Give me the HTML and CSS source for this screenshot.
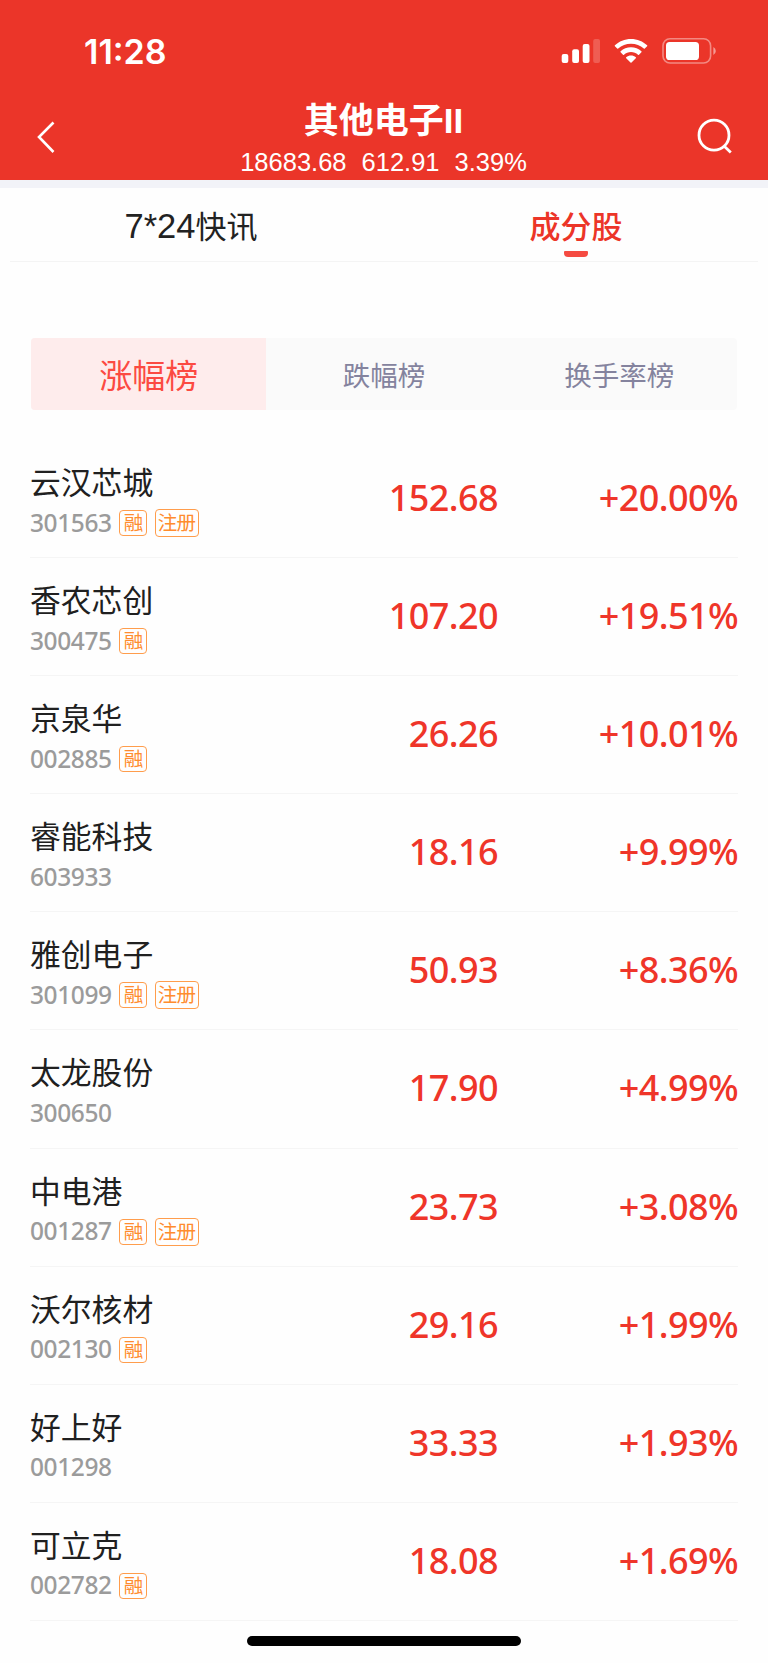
FILE: index.html
```html
<!DOCTYPE html>
<html lang="zh-CN">
<head>
<meta charset="utf-8">
<meta name="viewport" content="width=device-width">
<title>其他电子II</title>
<link rel="stylesheet" href="styles.css">
</head>
<body>
<header class="header">
  <div class="status">
    <span class="time">11:28</span>
    <svg class="status-icons" width="160" height="32" viewBox="0 0 160 32" fill="#fff">
      <rect x="1.7" y="18" width="6.6" height="9" rx="2"/>
      <rect x="12.2" y="13.3" width="6.8" height="13.7" rx="2"/>
      <rect x="22.7" y="8" width="6.8" height="19" rx="2"/>
      <rect x="33.2" y="3" width="6.8" height="24" rx="2" opacity=".2"/>
      <g transform="translate(54.6 3)">
        <path d="M16.4 0C10.1 0 4.5 2.4.3 6.3q-.5.5 0 1L2.6 9.6q.5.5 1 0C7 6.4 11.5 4.8 16.4 4.8s9.400 1.600 12.800 4.800q.5.5 1 0l2.300-2.300q.5-.5 0-1C28.300 2.400 22.700 0 16.400 0z"/>
        <path d="M16.400 8.300c-4 0-7.600 1.500-10.400 4q-.5.5 0 1l2.400 2.400q.5.5 1 .1c1.900-1.700 4.300-2.700 7-2.700s5.100 1 7 2.700q.5.4 1-.1l2.400-2.400q.5-.5 0-1c-2.800-2.500-6.400-4-10.400-4z"/>
        <path d="M16.400 16.500c-1.800 0-3.500.6-4.800 1.700q-.6.500 0 1l4.300 4.400q.5.500 1 0l4.300-4.400q.6-.5 0-1c-1.300-1.100-3-1.700-4.800-1.700z"/>
      </g>
      <rect x="103" y="2.700" width="47.600" height="24.300" rx="7" fill="none" stroke="#fff" stroke-opacity=".42" stroke-width="1.600"/>
      <rect x="106" y="6" width="33" height="18" rx="3.600"/>
      <path d="M153.400 11v8q2.400-1.400 2.400-4t-2.400-4z" opacity=".5"/>
    </svg>
  </div>
  <div class="nav">
    <svg class="back" width="24" height="36" viewBox="0 0 24 36" fill="none" stroke="#fff" stroke-width="2.600"><path d="M18.500 3.500 4 18l14.500 15"/></svg>
    <div class="heading">
      <h1 class="title">其他电子<span class="roman">II</span></h1>
      <div class="quote"><span>18683.68</span><span>612.91</span><span>3.39%</span></div>
    </div>
    <svg class="search" width="40" height="40" viewBox="0 0 40 40" fill="none" stroke="#fff" stroke-width="2.800"><circle cx="18" cy="18.200" r="15"/><path d="m28 29 6.800 6.400"/></svg>
  </div>
</header>
<nav class="tabs">
  <a class="tab"><span class="tab-digits">7*24</span>快讯</a>
  <a class="tab tab-active">成分股</a>
</nav>
<main class="content">
  <div class="segments">
    <div class="segment segment-active">涨幅榜</div>
    <div class="segment">跌幅榜</div>
    <div class="segment">换手率榜</div>
  </div>
  <ul class="stocks">
    <li class="stock"><div class="info"><div class="name">云汉芯城</div><div class="meta"><span class="code">301563</span><span class="tag">融</span><span class="tag tag-wide">注册</span></div></div><div class="price">152.68</div><div class="change">+20.00%</div></li>
    <li class="stock"><div class="info"><div class="name">香农芯创</div><div class="meta"><span class="code">300475</span><span class="tag">融</span></div></div><div class="price">107.20</div><div class="change">+19.51%</div></li>
    <li class="stock"><div class="info"><div class="name">京泉华</div><div class="meta"><span class="code">002885</span><span class="tag">融</span></div></div><div class="price">26.26</div><div class="change">+10.01%</div></li>
    <li class="stock"><div class="info"><div class="name">睿能科技</div><div class="meta"><span class="code">603933</span></div></div><div class="price">18.16</div><div class="change">+9.99%</div></li>
    <li class="stock"><div class="info"><div class="name">雅创电子</div><div class="meta"><span class="code">301099</span><span class="tag">融</span><span class="tag tag-wide">注册</span></div></div><div class="price">50.93</div><div class="change">+8.36%</div></li>
    <li class="stock"><div class="info"><div class="name">太龙股份</div><div class="meta"><span class="code">300650</span></div></div><div class="price">17.90</div><div class="change">+4.99%</div></li>
    <li class="stock"><div class="info"><div class="name">中电港</div><div class="meta"><span class="code">001287</span><span class="tag">融</span><span class="tag tag-wide">注册</span></div></div><div class="price">23.73</div><div class="change">+3.08%</div></li>
    <li class="stock"><div class="info"><div class="name">沃尔核材</div><div class="meta"><span class="code">002130</span><span class="tag">融</span></div></div><div class="price">29.16</div><div class="change">+1.99%</div></li>
    <li class="stock"><div class="info"><div class="name">好上好</div><div class="meta"><span class="code">001298</span></div></div><div class="price">33.33</div><div class="change">+1.93%</div></li>
    <li class="stock"><div class="info"><div class="name">可立克</div><div class="meta"><span class="code">002782</span><span class="tag">融</span></div></div><div class="price">18.08</div><div class="change">+1.69%</div></li>
  </ul>
</main>
<div class="home-indicator"></div>
</body>
</html>
```
FILE: styles.css
```css
* { box-sizing: border-box; }
body {
  margin: 0;
  height: 1663px;
  overflow: hidden;
  background: #fefefe;
  color: #222;
  font-family: "Liberation Sans", "Noto Sans CJK SC", sans-serif;
}
.header {
  height: 188px;
  background: #eb3529;
  border-bottom: 8px solid #f2f3f8;
  color: #fff;
}
.status {
  height: 94px;
  padding: 36px 48px 0 84px;
  display: flex;
  justify-content: space-between;
}
.time {
  font: 600 34px/32px Inter, sans-serif;
}
.nav {
  height: 86px;
  padding: 0 32px 0 35px;
  display: grid;
  grid-template-columns: 40px 1fr 40px;
}
.back { margin-top: 25px; }
.search { margin-top: 23px; }
.heading {
  display: flex;
  flex-direction: column;
  align-items: center;
}
.title {
  margin: 0 4px 0 0;
  font: 700 35px/48px "Noto Sans CJK SC", sans-serif;
  white-space: nowrap;
}
.roman {
  font-family: "Liberation Sans", sans-serif;
}
.quote {
  display: flex;
  gap: 15px;
  margin: -1px 0 0 -4px;
  font-size: 25.500px;
  line-height: 36px;
}
.tabs {
  height: 74px;
  margin: 0 10px;
  border-bottom: 1px solid #f4f4f4;
  display: grid;
  grid-template-columns: 362px 1fr;
  column-gap: 13px;
  justify-items: center;
  font: 400 31px/73px "Noto Sans CJK SC", sans-serif;
}
.tab { position: relative; }
.tab-digits {
  font-family: "Liberation Sans", sans-serif;
  font-size: 34.500px;
}
.tab-active {
  margin-left: 9px;
  color: #ec3528;
  font-weight: 500;
}
.tab-active::after {
  content: "";
  position: absolute;
  left: 50%;
  top: 63px;
  width: 24px;
  height: 6px;
  margin-left: -12px;
  background: #f54b42;
  border-radius: 1px 1px 4px 4px;
}
.content { padding: 76px 31px 0; }
.segments {
  display: grid;
  grid-template-columns: repeat(3, 1fr);
  height: 72px;
  border-radius: 4px;
  overflow: hidden;
  background: #fafafa;
  text-align: center;
  font: 400 27.500px/73px "Noto Sans CJK SC", sans-serif;
  color: #84839e;
}
.segment-active {
  background: #feecec;
  color: #fc4a42;
  font-size: 33px;
}
.stocks {
  list-style: none;
  margin: 30px -1px 0;
  padding: 0;
}
.stock {
  height: 118.100px;
  display: grid;
  grid-template-columns: 268px 200px 240px;
  border-bottom: 1px solid #f5f5f5;
  padding-top: 18px;
}
.name {
  font: 400 30.800px/46px "Noto Sans CJK SC", sans-serif;
  color: #202020;
}
.meta {
  height: 32px;
  margin-top: 3px;
  display: flex;
  align-items: center;
}
.code {
  width: 89px;
  margin-top: -1px;
  font: 500 24.500px/32px "Noto Sans", sans-serif;
  letter-spacing: -0.400px;
  color: #9b9b9b;
}
.tag {
  width: 28px;
  height: 26px;
  margin-right: 7.500px;
  border: 1.500px solid #ff9d4c;
  border-radius: 4px;
  display: flex;
  justify-content: center;
  font: 400 19.500px/22px "Noto Sans CJK SC", sans-serif;
  letter-spacing: -0.800px;
  color: #ff8c2e;
  white-space: nowrap;
}
.tag-wide {
  width: 44px;
  height: 28px;
  line-height: 24px;
}
.price, .change {
  text-align: right;
  font: 500 36px/79px "Noto Sans", sans-serif;
  letter-spacing: -0.600px;
  color: #ef3529;
}
.home-indicator {
  width: 274px;
  height: 10px;
  margin: 15px 0 0 247px;
  border-radius: 5px;
  background: #000;
}
```
